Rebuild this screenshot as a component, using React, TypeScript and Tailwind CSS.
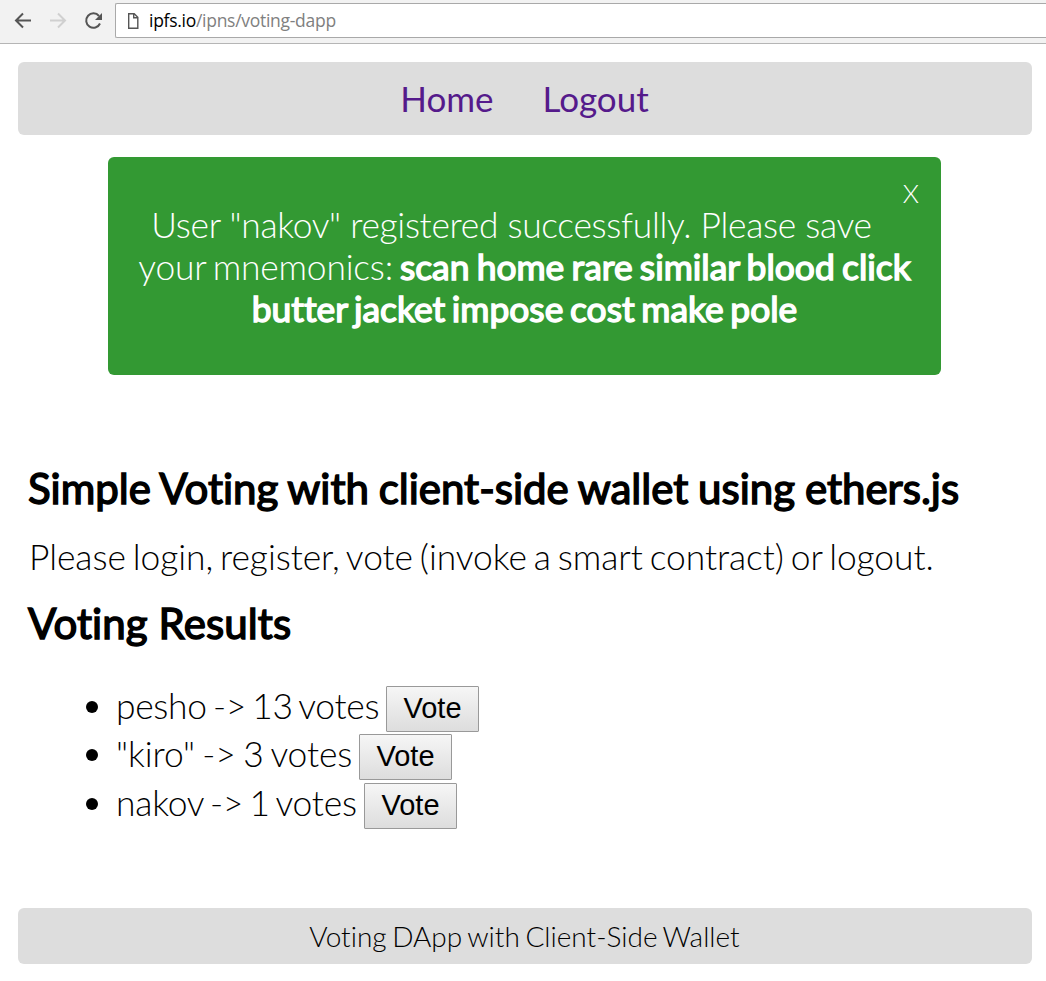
import React from "react";

const votes = [
  { text: "pesho -> 13 votes", row: "h-[48px]", label: "w-[262px] tracking-[-0.3px] [word-spacing:-3px]" },
  { text: "\"kiro\" -> 3 votes", row: "h-[49px]", label: "w-[235px] tracking-[-0.1px] [word-spacing:-2px]" },
  { text: "nakov -> 1 votes", row: "h-[49px]", label: "w-[240px] tracking-[-0.2px] [word-spacing:-3px]" },
];

function Toolbar() {
  return (
    <header className="flex h-[44px] items-start border-b border-[#b5b5b5] bg-[#f2f2f2]">
      <svg width="115" height="43" viewBox="0 0 115 43" fill="none" className="shrink-0">
        <path d="M31 20.500H16M23 13.500l-7 7 7 7" stroke="#555" strokeWidth="2" />
        <path d="M50 20.500h15M58 13.500l7 7-7 7" stroke="#d0d0d0" strokeWidth="2" />
        <path d="M99 16A7.200 7.200 0 1 0 100 23.500" stroke="#555" strokeWidth="2" />
        <path d="M102 13v7h-7z" fill="#555" />
      </svg>
      <div className="mt-[3px] flex h-[35px] flex-1 items-center rounded-l-[2px] border border-r-0 border-[#a9a9a9] bg-white">
        <svg width="33" height="33" viewBox="0 0 33 33" fill="none" className="shrink-0">
          <path d="M12.700 9.700h5.500l3.600 3.600v10.900h-9.100zM17.700 9.700v4.100h4.100" stroke="#555" strokeWidth="1.400" />
        </svg>
        <div className="font-['Open_Sans',sans-serif] text-[17.5px] tracking-[-0.28px] text-[#808080]">
          <span className="text-black">ipfs.io</span>/ipns/voting-dapp
        </div>
      </div>
    </header>
  );
}

export default function App() {
  return (
    <div className="h-[981px] overflow-hidden bg-white font-['Lato',sans-serif] text-black [font-variant-ligatures:none]">
      <Toolbar />
      <nav className="ml-[18px] mr-[14px] mt-[18px] flex h-[73px] items-center justify-center gap-[49px] rounded-[6px] bg-[#ddd] pr-px text-[35px] text-[#551a8b]">
        <a>Home</a>
        <a>Logout</a>
      </nav>
      <section className="relative ml-[108px] mt-[22px] h-[218px] w-[833px] rounded-[6px] bg-[#339933] pt-[47px] text-center text-[35.4px] font-light leading-[42px] text-white">
        <button className="absolute right-[22px] top-[18px] text-[26px] leading-[36px]">X</button>
        <p className="whitespace-nowrap pr-[26px] tracking-[-0.3px] [word-spacing:0px]">User "nakov" registered successfully. Please save</p>
        <p className="whitespace-nowrap tracking-[-0.2px] [word-spacing:-2.5px]">your mnemonics: <b className="font-normal tracking-normal [-webkit-text-stroke:1.5px_white] [word-spacing:-1.8px]">scan home rare similar blood click</b></p>
        <p><b className="font-normal [-webkit-text-stroke:1.5px_white] [word-spacing:-2.4px]">butter jacket impose cost make pole</b></p>
      </section>
      <main className="ml-[28px] mt-[87px]">
        <h1 className="whitespace-nowrap text-[42px] font-normal leading-[52px] [-webkit-text-stroke:1.5px_black] [word-spacing:-0.9px]">Simple Voting with client-side wallet using ethers.js</h1>
        <p className="ml-px mt-[21px] whitespace-nowrap text-[35.4px] font-light leading-[44px] tracking-[-0.06px] [word-spacing:-2.6px]">Please login, register, vote (invoke a smart contract) or logout.</p>
        <h1 className="mt-[18px] text-[42px] font-normal leading-[52px] tracking-[0.1px] [-webkit-text-stroke:1.5px_black]">Voting Results</h1>
        <ul className="mt-[36px] pl-[58px]">
          {votes.map((v) => (
            <li key={v.text} className={`${v.row} flex items-start`}>
              <span className="mr-[18px] mt-[16px] size-[12px] shrink-0 rounded-full bg-black" />
              <span className={`${v.label} -mt-px mr-[8px] whitespace-nowrap text-[35.4px] font-light leading-[43px]`}>{v.text}</span>
              <button className="mt-px h-[46px] w-[93px] rounded-[1px] border border-[#999] bg-linear-to-b from-[#f6f6f6] to-[#ddd] pb-px font-['Liberation_Sans',sans-serif] text-[29px] leading-[43px]">Vote</button>
            </li>
          ))}
        </ul>
      </main>
      <footer className="ml-[18px] mr-[14px] mt-[77px] flex h-[56px] items-center justify-center rounded-[6px] bg-[#ddd] pb-px pr-px text-[28px] font-light [word-spacing:-2px]">
        Voting DApp with Client-Side Wallet
      </footer>
    </div>
  );
}
